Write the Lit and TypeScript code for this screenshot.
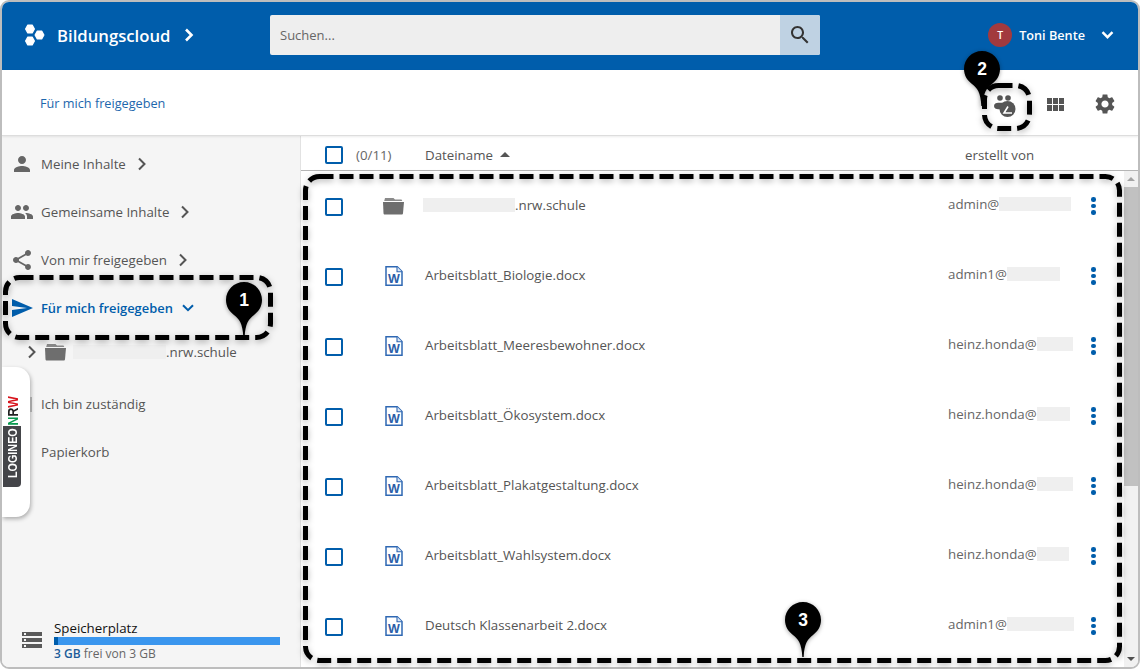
import { LitElement, html, css } from "lit";
import { customElement } from "lit/decorators.js";

const P = {
  person: "M12 12c2.21 0 4-1.79 4-4s-1.79-4-4-4-4 1.79-4 4 1.79 4 4 4zm0 2c-2.67 0-8 1.34-8 4v2h16v-2c0-2.66-5.33-4-8-4z",
  people: "M16 11c1.66 0 2.99-1.34 2.99-3S17.66 5 16 5c-1.66 0-3 1.34-3 3s1.34 3 3 3zm-8 0c1.66 0 2.99-1.34 2.99-3S9.66 5 8 5C6.34 5 5 6.34 5 8s1.34 3 3 3zm0 2c-2.33 0-7 1.17-7 3.5V19h14v-2.5c0-2.33-4.67-3.5-7-3.5zm8 0c-.29 0-.62.02-.97.05 1.16.84 1.97 1.97 1.97 3.45V19h6v-2.5c0-2.33-4.67-3.5-7-3.5z",
  share: "M18 16.08c-.76 0-1.44.3-1.96.77L8.91 12.7c.05-.23.09-.46.09-.7s-.04-.47-.09-.7l7.05-4.11c.54.5 1.25.81 2.04.81 1.66 0 3-1.34 3-3s-1.34-3-3-3-3 1.34-3 3c0 .24.04.47.09.7L8.04 9.81C7.5 9.31 6.79 9 6 9c-1.66 0-3 1.34-3 3s1.34 3 3 3c.79 0 1.5-.31 2.04-.81l7.12 4.16c-.05.21-.08.43-.08.65 0 1.61 1.31 2.92 2.92 2.92 1.61 0 2.92-1.31 2.92-2.92s-1.31-2.92-2.92-2.92z",
  send: "M2.01 21L23 12 2.01 3 2 10l15 2-15 2z",
  search: "M15.5 14h-.79l-.28-.27C15.41 12.59 16 11.11 16 9.5 16 5.91 13.09 3 9.5 3S3 5.91 3 9.5 5.91 16 9.5 16c1.61 0 3.09-.59 4.23-1.57l.27.28v.79l5 4.99L20.49 19l-4.99-5zm-6 0C7.01 14 5 11.99 5 9.5S7.01 5 9.5 5 14 7.01 14 9.5 11.99 14 9.5 14z",
  gear: "M19.14 12.94c.04-.3.06-.61.06-.94 0-.32-.02-.64-.07-.94l2.03-1.58c.18-.14.23-.41.12-.61l-1.92-3.32c-.12-.22-.37-.29-.59-.22l-2.39.96c-.5-.38-1.03-.7-1.62-.94l-.36-2.54c-.04-.24-.24-.41-.48-.41h-3.84c-.24 0-.43.17-.47.41l-.36 2.54c-.59.24-1.13.57-1.62.94l-2.39-.96c-.22-.08-.47 0-.59.22L2.74 8.87c-.12.21-.08.47.12.61l2.03 1.58c-.05.3-.09.63-.09.94s.02.64.07.94l-2.03 1.58c-.18.14-.23.41-.12.61l1.92 3.32c.12.22.37.29.59.22l2.39-.96c.5.38 1.03.7 1.62.94l.36 2.54c.05.24.24.41.48.41h3.84c.24 0 .44-.17.47-.41l.36-2.54c.59-.24 1.13-.56 1.62-.94l2.39.96c.22.08.47 0 .59-.22l1.92-3.32c.12-.22.07-.47-.12-.61l-2.01-1.58zM12 15.6c-1.98 0-3.6-1.62-3.6-3.6s1.62-3.6 3.6-3.6 3.6 1.62 3.6 3.6-1.62 3.6-3.6 3.6z",
  storage: "M2 20h20v-4H2v4zm2-3h2v2H4v-2zM2 4v4h20V4H2zm4 3H4V5h2v2zm-4 7h20v-4H2v4zm2-3h2v2H4v-2z",
};

const icon = (d: string, size: number, cls = "") =>
  html`<svg class=${cls} width=${size} height=${size} viewBox="0 0 24 24" fill="currentColor"><path d=${d}></path></svg>`;

const folder = (cls = "") =>
  html`<svg class=${cls} width="24" height="24" viewBox="0 0 24 24"><path d="M4 4h8.500l1.500 1.600h6.500l.8 1.400H3.200z" fill="#8a8a8a"></path><path d="M2 8h21l-1 11.300c-.1.800-.6 1.200-1.300 1.200H3.800c-.8 0-1.200-.4-1.300-1.200z" fill="#6e6e6e"></path></svg>`;

const chevR = (cls = "", sw = 2) =>
  html`<svg class=${cls} width="10" height="14" viewBox="0 0 10 14" fill="none" stroke="currentColor" stroke-width=${sw}><path d="M2 1.500 7.500 7 2 12.500"></path></svg>`;
const chevD = (cls = "", w = 12, sw = 2) =>
  html`<svg class=${cls} width=${w} height="8" viewBox="0 0 12 8" fill="none" stroke="currentColor" stroke-width=${sw}><path d="M1 1.200 6 6.200 11 1.200"></path></svg>`;

const wordIcon = html`<svg class="word" width="18" height="20" viewBox="0 0 18 20"><path d="M1 .8h11.200l4.800 4.800v13.600H1z" fill="#fff" stroke="#2f68b3" stroke-width="1.500"></path><path d="M12 .8v5h5" fill="#dbe6f5" stroke="#2f68b3" stroke-width="1.100"></path><text x="8.800" y="16.500" text-anchor="middle" class="wtext">W</text></svg>`;

const pin = (n: string) => html`<svg width="36" height="56" viewBox="0 0 36 56" class="pinsvg"><path d="M18 0C8 0 0 8 0 18c0 6.500 3.400 11.500 8 15 5 3.800 8.800 8.500 9.300 22h1.400C19.200 41.500 23 36.800 28 33c4.600-3.500 8-8.500 8-15C36 8 28 0 18 0z" fill="#000"></path></svg><span class="pin-n">${n}</span>`;

const callout = (cls: string, w: number, h: number) => html`<svg class="call ${cls}" width=${w} height=${h} viewBox="0 0 ${w} ${h}" fill="none"><rect x="2.500" y="2.500" width=${w - 5} height=${h - 5} rx="14" stroke="#000" stroke-width="5" stroke-dasharray="14 6"></rect></svg>`;

const ROWS = [
  ["folder", ".nrw.schule", "admin@", 72, 92],
  ["word", "Arbeitsblatt_Biologie.docx", "admin1@", 53, 0],
  ["word", "Arbeitsblatt_Meeresbewohner.docx", "heinz.honda@", 36, 0],
  ["word", "Arbeitsblatt_Ökosystem.docx", "heinz.honda@", 33, 0],
  ["word", "Arbeitsblatt_Plakatgestaltung.docx", "heinz.honda@", 36, 0],
  ["word", "Arbeitsblatt_Wahlsystem.docx", "heinz.honda@", 32, 0],
  ["word", "Deutsch Klassenarbeit 2.docx", "admin1@", 67, 0],
] as const;

@customElement("app-root")
export class AppRoot extends LitElement {
  static styles = css`
    :host { display: block; width: 1140px; height: 669px; position: relative; font-family: "Open Sans", sans-serif; font-size: 13.3px; color: #555; overflow: hidden; background: #fff; }
    * { box-sizing: border-box; }
    .frame { width: 1140px; height: 669px; border: 2px solid #bdbdbd; border-radius: 9px; overflow: hidden; display: flex; flex-direction: column; background: #fff; }
    header { height: 68px; padding-bottom: 2px; background: #005dab; display: flex; align-items: center; color: #fff; flex: none; }
    .brand { width: 268px; display: flex; align-items: center; padding-left: 22px; font-weight: 600; font-size: 16.7px; }
    .brand .name { margin-left: 11px; }
    .brand .chev { margin-left: 14px; }
    .search { width: 550px; height: 40px; display: flex; background: #eeeeee; border-radius: 2px; overflow: hidden; }
    .search .ph { flex: 1; padding-left: 10px; line-height: 40px; color: #666; font-size: 13px; }
    .search .btn { width: 40px; background: #bfd2e3; display: flex; align-items: center; justify-content: center; color: #333; }
    .user { margin-left: auto; display: flex; align-items: center; padding-right: 24px; font-weight: 600; font-size: 12.7px; }
    .avatar { width: 24px; height: 24px; border-radius: 50%; background: #a23a3e; font-size: 10.5px; display: flex; align-items: center; justify-content: center; margin-right: 7px; font-weight: 600; }
    .user .chev { margin-left: 16px; }
    .toolbar { height: 66px; flex: none; display: flex; align-items: center; padding-left: 38px; padding-right: 21px; border-bottom: 1px solid #ddd; box-shadow: 0 1px 2px rgba(0,0,0,.08); position: relative; z-index: 2; background: #fff; }
    .crumb { color: #1d67ad; font-size: 12.7px; flex: 1; margin-top: 1px; }
    .tools { display: flex; align-items: center; color: #555; }
    .badge { margin-right: 30px; margin-top: 6px; }
    .grid { margin-right: 29px; margin-top: 3px; }
    .gear { margin-top: 2px; }
    .body { flex: 1; display: flex; min-height: 0; }
    aside { width: 299px; flex: none; background: #f5f5f5; border-right: 1px solid #e2e2e2; display: flex; flex-direction: column; position: relative; padding-top: 4px; }
    .item { height: 48px; display: flex; align-items: center; padding-left: 8px; color: #555; }
    .item .ic { width: 24px; height: 24px; margin-right: 7px; flex: none; color: #666; }
    .item .chev { margin-left: 11px; color: #555; }
    .item.active { color: #005dab; font-weight: 600; font-size: 12.9px; }
    .item.active .ic { color: #005dab; }
    .item.active .chev { color: #005dab; margin-left: 9px; }
    .sub { height: 40px; display: flex; align-items: center; padding-left: 25px; margin-bottom: 8px; }
    .sub .chev { color: #555; margin-right: 6px; }
    .sub .fold { margin-right: 6px; }
    .blur { background: #efefef; display: inline-block; height: 14px; flex: none; }
    .item.plain { padding-left: 39px; }
    .store { margin-top: auto; padding: 0 20px 5px 18px; display: flex; align-items: center; }
    .store .ic { color: #5a5a5a; margin-right: 10px; flex: none; margin-bottom: 3px; }
    .store .inf { flex: 1; }
    .store .t { color: #111; font-size: 13.3px; line-height: 14px; }
    .bar { height: 8px; background: #3a96ee; margin: 2px 0 1px; }
    .bar i { display: block; width: 4px; height: 100%; background: #005dab; }
    .store .f { font-size: 12px; line-height: 16px; color: #666; }
    .store .f b { color: #1d5c99; font-weight: 600; }
    .logineo { position: absolute; left: 0; top: 231px; width: 28px; height: 150px; background: #fff; border-radius: 0 14px 14px 0; box-shadow: 1px 2px 4px rgba(0,0,0,.3); }
    .logineo::after { content: ""; position: absolute; left: 28px; top: 30px; width: 1.500px; height: 15px; background: #a5a5a5; }
    .lo { position: absolute; left: 1px; top: 59px; width: 18px; height: 61px; background: #444549; color: #fff; border-radius: 0 0 4px 0; display: flex; align-items: center; justify-content: center; padding: 0 0 6px 1px; }
    .lo span { font: 700 13.500px "Liberation Sans", sans-serif; writing-mode: vertical-rl; transform: rotate(180deg) scaleY(.8); }
    .nrw { position: absolute; left: 1px; top: 29px; width: 18px; height: 30px; display: flex; align-items: center; justify-content: center; padding-left: 1px; }
    .nrw span.w { font: 700 14px "Liberation Sans", sans-serif; writing-mode: vertical-rl; transform: rotate(180deg) scaleY(.88); }
    .n1 { color: #222; } .n2 { color: #07994f; } .n3 { color: #d8141c; }
    main { flex: 1; min-width: 0; display: flex; flex-direction: column; }
    .thead { height: 35px; flex: none; display: flex; align-items: center; border-bottom: 1px solid #b5b5b5; padding: 4px 0 0 24px; background: #fff; }
    .cb { width: 18px; height: 18px; border: 2px solid #005dab; border-radius: 2px; flex: none; background: #fff; }
    .count { margin-left: 13px; width: 69px; color: #666; }
    .sort { display: flex; align-items: center; gap: 7px; width: 540px; }
    .sort i { width: 0; height: 0; border-left: 5px solid transparent; border-right: 5px solid transparent; border-bottom: 5px solid #555; margin-top: -1px; }
    .lst { flex: 1; display: flex; min-height: 0; }
    .rows { flex: 1; overflow: hidden; }
    .row { height: 70px; display: flex; align-items: center; padding-left: 24px; }
    .row .cb { margin-top: 2px; }
    .row .fi { width: 44px; margin-left: 38px; display: flex; }
    .word { margin-left: 4px; }
    .row .name { width: 523px; display: flex; align-items: center; color: #555; padding-right: 8px; margin-top: -3px; }
    .row .name .blur { margin-left: -2px; }
    .row .by { width: 143px; display: flex; align-items: center; color: #666; margin-top: -4px; }
    .wtext { font: 700 12.500px "Liberation Sans", sans-serif; fill: #2b5ea8; }
    .dots { display: flex; flex-direction: column; gap: 2.200px; }
    .dots i { width: 4.500px; height: 4.500px; border-radius: 50%; background: #005dab; }
    .sb { width: 14px; flex: none; background: #f1f1f1; display: flex; flex-direction: column; align-items: center; }
    .sb .up { height: 16px; display: flex; align-items: center; flex: none; }
    .sb .up i { width: 0; height: 0; border-left: 4px solid transparent; border-right: 4px solid transparent; border-bottom: 4px solid #a3a3a3; }
    .sb .th { width: 100%; height: 299px; flex: none; background: #c1c1c1; }
    .sb .dn { height: 16px; display: flex; align-items: center; flex: none; margin-top: auto; }
    .sb .dn i { width: 0; height: 0; border-left: 4px solid transparent; border-right: 4px solid transparent; border-top: 4px solid #505050; }
    .call { position: absolute; filter: drop-shadow(0 2px 3px rgba(0,0,0,.3)); pointer-events: none; z-index: 4; }
    .c1 { left: 3px; top: 275px; }
    .c2 { left: 982px; top: 83px; }
    .c3 { left: 303px; top: 174px; }
    .pin { position: absolute; width: 36px; height: 56px; z-index: 5; }
    .pinsvg { display: block; filter: drop-shadow(0 1px 2px rgba(0,0,0,.35)); }
    .pin-n { position: absolute; left: 0; top: 7px; width: 36px; text-align: center; color: #fff; font: 700 17.500px "Liberation Sans", sans-serif; line-height: 22px; }
    .p1 { left: 226px; top: 282px; }
    .p2 { left: 964px; top: 51px; }
    .p3 { left: 785px; top: 602px; }
  `;

  render() {
    return html`
      <div class="frame">
        <header>
          <div class="brand">
            <svg width="22" height="24" viewBox="0 0 22 24" fill="#fff" stroke="#fff" stroke-width="1.200" stroke-linejoin="round"><path d="M3.800 2h4.400l2.200 4-2.200 4H3.800L1.600 6z"></path><path d="M3.800 14h4.400l2.200 4-2.200 4H3.800L1.600 18z"></path><path d="M13.300 8h4.400l2.200 4-2.200 4h-4.400L11.100 12z"></path></svg>
            <span class="name">Bildungscloud</span>${chevR("chev", 2.6)}
          </div>
          <div class="search">
            <div class="ph">Suchen...</div>
            <div class="btn">${icon(P.search, 24)}</div>
          </div>
          <div class="user"><span class="avatar">T</span>Toni Bente${chevD("chev", 13, 2.4)}</div>
        </header>
        <div class="toolbar">
          <div class="crumb">Für mich freigegeben</div>
          <div class="tools">
            <svg class="badge" width="24" height="22" viewBox="0 0 24 22" fill="#555"><circle cx="7" cy="3" r="2.800"></circle><circle cx="15" cy="3" r="2.800"></circle><path d="M1 11c0-2.200 2-3.200 4.200-3.200H13v6.400H5.200C3 14.200 1 13.200 1 11z"></path><circle cx="14.500" cy="14" r="8"></circle><path d="M15 11.500 11 18H19" fill="none" stroke="#fff" stroke-width="1.600"></path></svg>
            <svg class="grid" width="17" height="13" viewBox="0 0 17 13" fill="#555"><rect x="0" y="0" width="5" height="6"></rect><rect x="6" y="0" width="5" height="6"></rect><rect x="12" y="0" width="5" height="6"></rect><rect x="0" y="7" width="5" height="6"></rect><rect x="6" y="7" width="5" height="6"></rect><rect x="12" y="7" width="5" height="6"></rect></svg>
            ${icon(P.gear, 24, "gear")}
          </div>
        </div>
        <div class="body">
          <aside>
            <div class="item">${icon(P.person, 24, "ic")}Meine Inhalte${chevR("chev")}</div>
            <div class="item">${icon(P.people, 24, "ic")}Gemeinsame Inhalte${chevR("chev")}</div>
            <div class="item">${icon(P.share, 24, "ic")}Von mir freigegeben${chevR("chev")}</div>
            <div class="item active">${icon(P.send, 24, "ic")}Für mich freigegeben${chevD("chev")}</div>
            <div class="sub">${chevR("chev")}${folder("fold")}<span class="blur" style="width:93px"></span>.nrw.schule</div>
            <div class="item plain">Ich bin zuständig</div>
            <div class="item plain">Papierkorb</div>
            <div class="store">
              ${icon(P.storage, 24, "ic")}
              <div class="inf">
                <div class="t">Speicherplatz</div>
                <div class="bar"><i></i></div>
                <div class="f"><b>3 GB</b> frei von 3 GB</div>
              </div>
            </div>
            <div class="logineo">
              <div class="nrw"><span class="w"><span class="n2">N</span><span class="n1">R</span><span class="n3">W</span></span></div>
              <div class="lo"><span>LOGINEO</span></div>
            </div>
          </aside>
          <main>
            <div class="thead">
              <span class="cb"></span><span class="count">(0/11)</span>
              <span class="sort">Dateiname<i></i></span>
              <span>erstellt von</span>
            </div>
            <div class="lst">
              <div class="rows">
                ${ROWS.map(([t, n, by, bw, fb]) => html`
                  <div class="row">
                    <span class="cb"></span>
                    <span class="fi">${t === "folder" ? folder() : wordIcon}</span>
                    <span class="name">${fb ? html`<span class="blur" style="width:${fb}px"></span>` : ""}${n}</span>
                    <span class="by">${by}<span class="blur" style="width:${bw}px"></span></span>
                    <span class="dots"><i></i><i></i><i></i></span>
                  </div>`)}
              </div>
              <div class="sb">
                <div class="up"><i></i></div><div class="th"></div><div class="dn"><i></i></div>
              </div>
            </div>
          </main>
        </div>
      </div>
      ${callout("c1", 270, 65)}
      ${callout("c2", 50, 48)}
      ${callout("c3", 819, 489)}
      <div class="pin p1">${pin("1")}</div>
      <div class="pin p2">${pin("2")}</div>
      <div class="pin p3">${pin("3")}</div>
    `;
  }
}
